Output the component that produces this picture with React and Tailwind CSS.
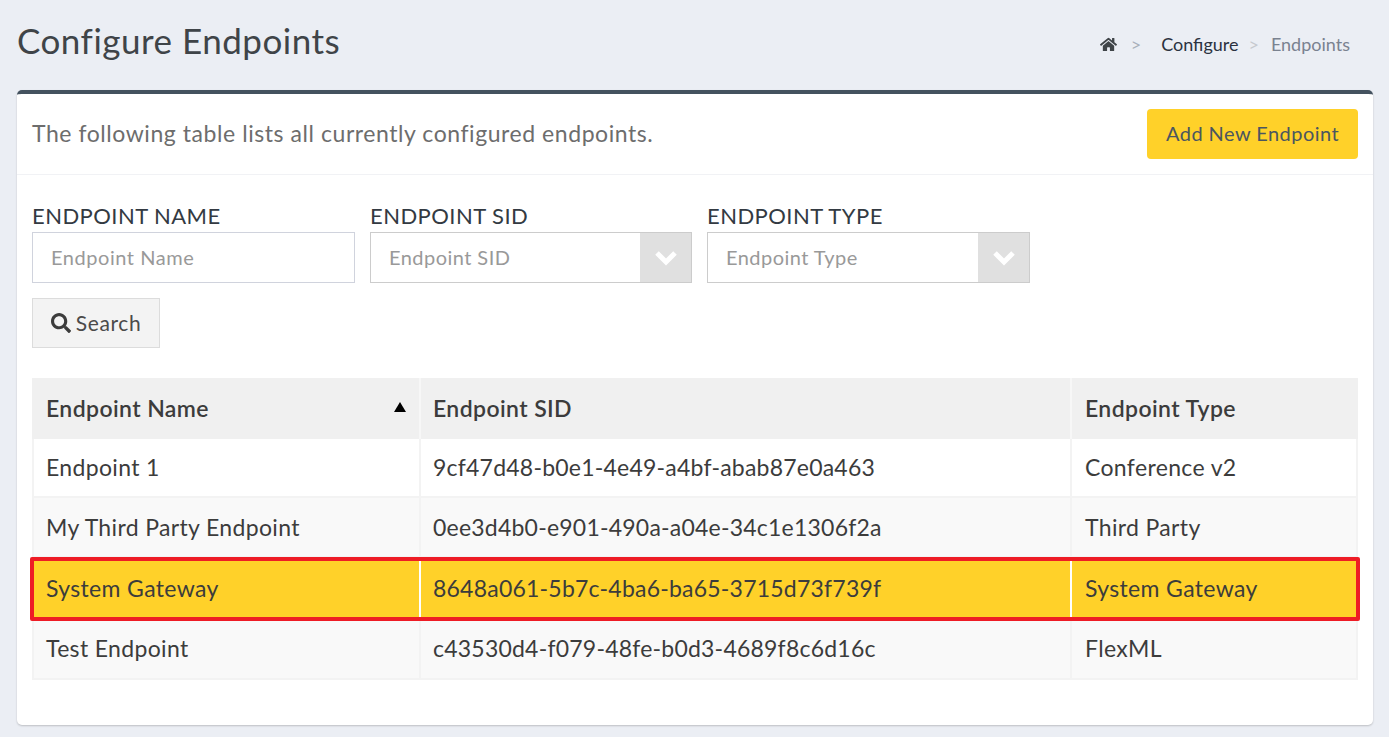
import { FaHome, FaSearch } from 'react-icons/fa';

const rows = [
  { name: 'Endpoint 1', sid: '9cf47d48-b0e1-4e49-a4bf-abab87e0a463', type: 'Conference v2', h: 'h-[59px]', bg: 'bg-white', pad: '' },
  { name: 'My Third Party Endpoint', sid: '0ee3d4b0-e901-490a-a04e-34c1e1306f2a', type: 'Third Party', h: 'h-[60px]', bg: 'bg-[#f9f9f9]', pad: '' },
  { name: 'System Gateway', sid: '8648a061-5b7c-4ba6-ba65-3715d73f739f', type: 'System Gateway', h: 'h-[62px]', bg: 'bg-[#ffd129]', pad: 'pb-[2px]', active: true },
  { name: 'Test Endpoint', sid: 'c43530d4-f079-48fe-b0d3-4689f8c6d16c', type: 'FlexML', h: 'h-[60px]', bg: 'bg-[#f9f9f9]', pad: 'pb-[2px]' },
];

const SelectBox = ({ label, placeholder, width }) => (
  <div className={width}>
    <label className="block h-[29px] text-[22px] leading-[26px] tracking-[0.45px] text-[#333a42]">{label}</label>
    <div className="flex h-[51px] items-center border border-[#cccccc] bg-white">
      <span className="flex-1 pb-[2px] pl-[18px] text-[20px] tracking-[0.45px] text-[#999999]">{placeholder}</span>
      <span className="flex h-full w-[51px] items-center justify-center bg-[#e0e0e0] text-white">
        <svg width="24" height="16" viewBox="0 0 24 16" fill="none" stroke="currentColor" strokeWidth="5">
          <polyline points="3,3 12,12 21,3" />
        </svg>
      </span>
    </div>
  </div>
);

const App = () => {
  return (
    <div className="h-[737px] overflow-hidden bg-[#ebeef4] pl-[17px] pr-4 font-['Lato','Liberation_Sans',sans-serif] text-[#3c3c3c]">
      {/* page title + breadcrumb */}
      <div className="flex h-[90px] items-start justify-between">
        <h1 className="pt-[18px] text-[35px] leading-[44px] tracking-[0.5px] text-[#3f4448]">Configure Endpoints</h1>
        <div className="flex items-center pr-[23px] pt-[33px] text-[18px] leading-[22px]">
          <FaHome size={17} className="text-[#3f4448]" />
          <span className="ml-[14px] text-[#a9b0ba]">&gt;</span>
          <span className="ml-[20px] text-[#2b3240]">Configure</span>
          <span className="ml-[10px] text-[#c6c9ce]">&gt;</span>
          <span className="ml-[12px] text-[#7a8290]">Endpoints</span>
        </div>
      </div>

      <div className="h-[635px] rounded-[5px] border-t-4 border-[#44525f] bg-white shadow-[0_1px_2px_rgba(0,0,0,0.2)]">
        {/* panel header */}
        <div className="flex h-[81px] items-center justify-between border-b border-[#f1f2f5] px-[15px]">
          <p className="pb-[2px] text-[23px] tracking-[0.56px] text-[#6d6d6d]">The following table lists all currently configured endpoints.</p>
          <button className="h-[50px] w-[211px] rounded-[4px] bg-[#ffd129] pb-[2px] text-[20px] tracking-[0.45px] text-[#4b5660]">Add New Endpoint</button>
        </div>

        <div className="px-[15px] pt-[28px]">
          <div className="flex gap-[15px]">
            <div className="w-[323px]">
              <label className="block h-[29px] text-[22px] leading-[26px] tracking-[0.45px] text-[#333a42]">ENDPOINT NAME</label>
              <input
                placeholder="Endpoint Name"
                className="h-[51px] w-full border border-[#d0d3dd] bg-white pb-[2px] pl-[18px] text-[20px] tracking-[0.55px] placeholder:text-[#999999]"
              />
            </div>
            <SelectBox label="ENDPOINT SID" placeholder="Endpoint SID" width="w-[322px]" />
            <SelectBox label="ENDPOINT TYPE" placeholder="Endpoint Type" width="w-[323px]" />
          </div>

          <button className="mt-[15px] flex h-[50px] w-[128px] items-center justify-center gap-[5px] border border-[#dcdcdc] bg-[#f3f3f3] text-[21px] tracking-[0.6px] text-[#4a4a4a]">
            <FaSearch size={20} className="text-[#3c3c3c]" />
            Search
          </button>

          {/* results table */}
          <div className="relative mt-[30px] w-[1326px]">
            <table className="w-full table-fixed border-separate border-spacing-0 text-[23px] tracking-[0.35px] text-[#3c3c3c]">
              <colgroup>
                <col className="w-[389px]" />
                <col className="w-[651px]" />
                <col className="w-[286px]" />
              </colgroup>
              <thead>
                <tr className="h-[61px] bg-[#f0f0f0] text-left">
                  <th className="relative border-r-2 border-[#f7f7f7] pl-[14px] font-semibold tracking-[0.4px]">
                    Endpoint Name
                    <span className="absolute right-[13px] top-[24px] h-0 w-0 border-x-[6px] border-b-[10px] border-x-transparent border-b-black" />
                  </th>
                  <th className="border-r-2 border-[#f7f7f7] pl-[12px] font-semibold tracking-[0.4px]">Endpoint SID</th>
                  <th className="pl-[13px] font-semibold tracking-[0.4px]">Endpoint Type</th>
                </tr>
              </thead>
              <tbody>
                {rows.map((r) => (
                  <tr key={r.name} className={`${r.h} ${r.bg}`}>
                    <td className={`${r.pad} ${r.active
                      ? 'border-r-2 border-white pl-[14px]'
                      : 'border-b-2 border-l-2 border-r-2 border-[#f3f3f3] pl-[12px]'}`}>{r.name}</td>
                    <td className={`${r.pad} tracking-[0.22px] ${r.active
                      ? 'border-r-2 border-white pl-[12px]'
                      : 'border-b-2 border-r-2 border-[#f3f3f3] pl-[12px]'}`}>{r.sid}</td>
                    <td className={`${r.pad} ${r.active
                      ? 'pl-[13px]'
                      : 'border-b-2 border-r-2 border-[#f3f3f3] pl-[13px]'}`}>{r.type}</td>
                  </tr>
                ))}
              </tbody>
            </table>
            {/* red annotation around the selected row */}
            <div className="pointer-events-none absolute left-[-2px] right-[-2px] top-[179px] h-[64px] rounded-[2px] border-[4px] border-[#ee1c25]" />
          </div>
        </div>
      </div>
    </div>
  );
};

export default App;
